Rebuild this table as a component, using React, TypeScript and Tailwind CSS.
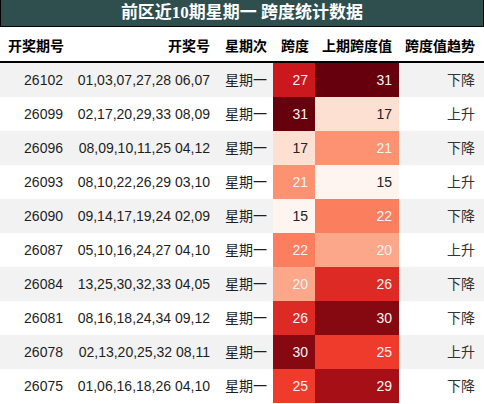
import React from 'react';

interface Row {
  issue: string;
  nums: string;
  weekday: string;
  span: number;
  prevSpan: number;
  trend: string;
}

const rows: Row[] = [
  { issue: '26102', nums: '01,03,07,27,28 06,07', weekday: '星期一', span: 27, prevSpan: 31, trend: '下降' },
  { issue: '26099', nums: '02,17,20,29,33 08,09', weekday: '星期一', span: 31, prevSpan: 17, trend: '上升' },
  { issue: '26096', nums: '08,09,10,11,25 04,12', weekday: '星期一', span: 17, prevSpan: 21, trend: '下降' },
  { issue: '26093', nums: '08,10,22,26,29 03,10', weekday: '星期一', span: 21, prevSpan: 15, trend: '上升' },
  { issue: '26090', nums: '09,14,17,19,24 02,09', weekday: '星期一', span: 15, prevSpan: 22, trend: '下降' },
  { issue: '26087', nums: '05,10,16,24,27 04,10', weekday: '星期一', span: 22, prevSpan: 20, trend: '上升' },
  { issue: '26084', nums: '13,25,30,32,33 04,05', weekday: '星期一', span: 20, prevSpan: 26, trend: '下降' },
  { issue: '26081', nums: '08,16,18,24,34 09,12', weekday: '星期一', span: 26, prevSpan: 30, trend: '下降' },
  { issue: '26078', nums: '02,13,20,25,32 08,11', weekday: '星期一', span: 30, prevSpan: 25, trend: '上升' },
  { issue: '26075', nums: '01,06,16,18,26 04,10', weekday: '星期一', span: 25, prevSpan: 29, trend: '下降' },
];

// Reds colour map, 15..31
const reds: Record<number, string> = {
  15: '#fff5f0',
  17: '#fee0d2',
  20: '#fca68a',
  21: '#fc9272',
  22: '#fb7e5e',
  25: '#ef3b2c',
  26: '#dd2a25',
  27: '#cb181d',
  29: '#a50f15',
  30: '#860811',
  31: '#67000d',
};

const font = { fontFamily: '"Liberation Sans", "Noto Sans CJK SC", sans-serif' };

function HeatCell({ value }: { value: number }) {
  return (
    <div
      className={`flex items-center justify-end px-[7px] whitespace-nowrap ${value >= 20 ? 'text-[#f4f4f4]' : 'text-[#222]'}`}
      style={{ backgroundColor: reds[value] }}
    >
      {value}
    </div>
  );
}

export default function App() {
  const cols = 'grid grid-cols-[71px_147px_55px_42px_84px_85px]';
  return (
    <div className="w-[484px] h-[404px] bg-white overflow-hidden" style={font}>
      {/* Title */}
      <div
        className="h-[27px] bg-[#2f4f4f] border border-t-0 border-black flex items-center justify-center text-white font-bold text-[17px] whitespace-nowrap"
        style={{ fontFamily: '"Liberation Serif", "Noto Sans CJK SC", serif' }}
      >
        前区近10期星期一 跨度统计数据
      </div>

      {/* Header */}
      <div className={`${cols} h-[36px] border-b-2 border-black text-[14px] font-bold text-black pt-[4px] whitespace-nowrap`}>
        <div className="flex items-center pl-[8px]">开奖期号</div>
        <div className="flex items-center justify-end pr-[8px]">开奖号</div>
        <div className="flex items-center justify-end pr-[6px]">星期次</div>
        <div className="flex items-center justify-end pr-[6px]">跨度</div>
        <div className="flex items-center justify-end pr-[7px]">上期跨度值</div>
        <div className="flex items-center justify-end pr-[9px]">跨度值趋势</div>
      </div>

      {/* Body */}
      {rows.map((r, i) => (
        <div
          key={r.issue}
          className={`${cols} h-[34px] text-[14px] text-[#1e1e1e] whitespace-nowrap ${i % 2 === 0 ? 'bg-[#f2f2f2]' : 'bg-white'}`}
        >
          <div className="flex items-center justify-end pr-[8px]">{r.issue}</div>
          <div className="flex items-center justify-end pr-[8px]">{r.nums}</div>
          <div className="flex items-center justify-end pr-[6px]">{r.weekday}</div>
          <HeatCell value={r.span} />
          <HeatCell value={r.prevSpan} />
          <div className="flex items-center justify-end pr-[9px] text-[#333]">{r.trend}</div>
        </div>
      ))}
    </div>
  );
}
